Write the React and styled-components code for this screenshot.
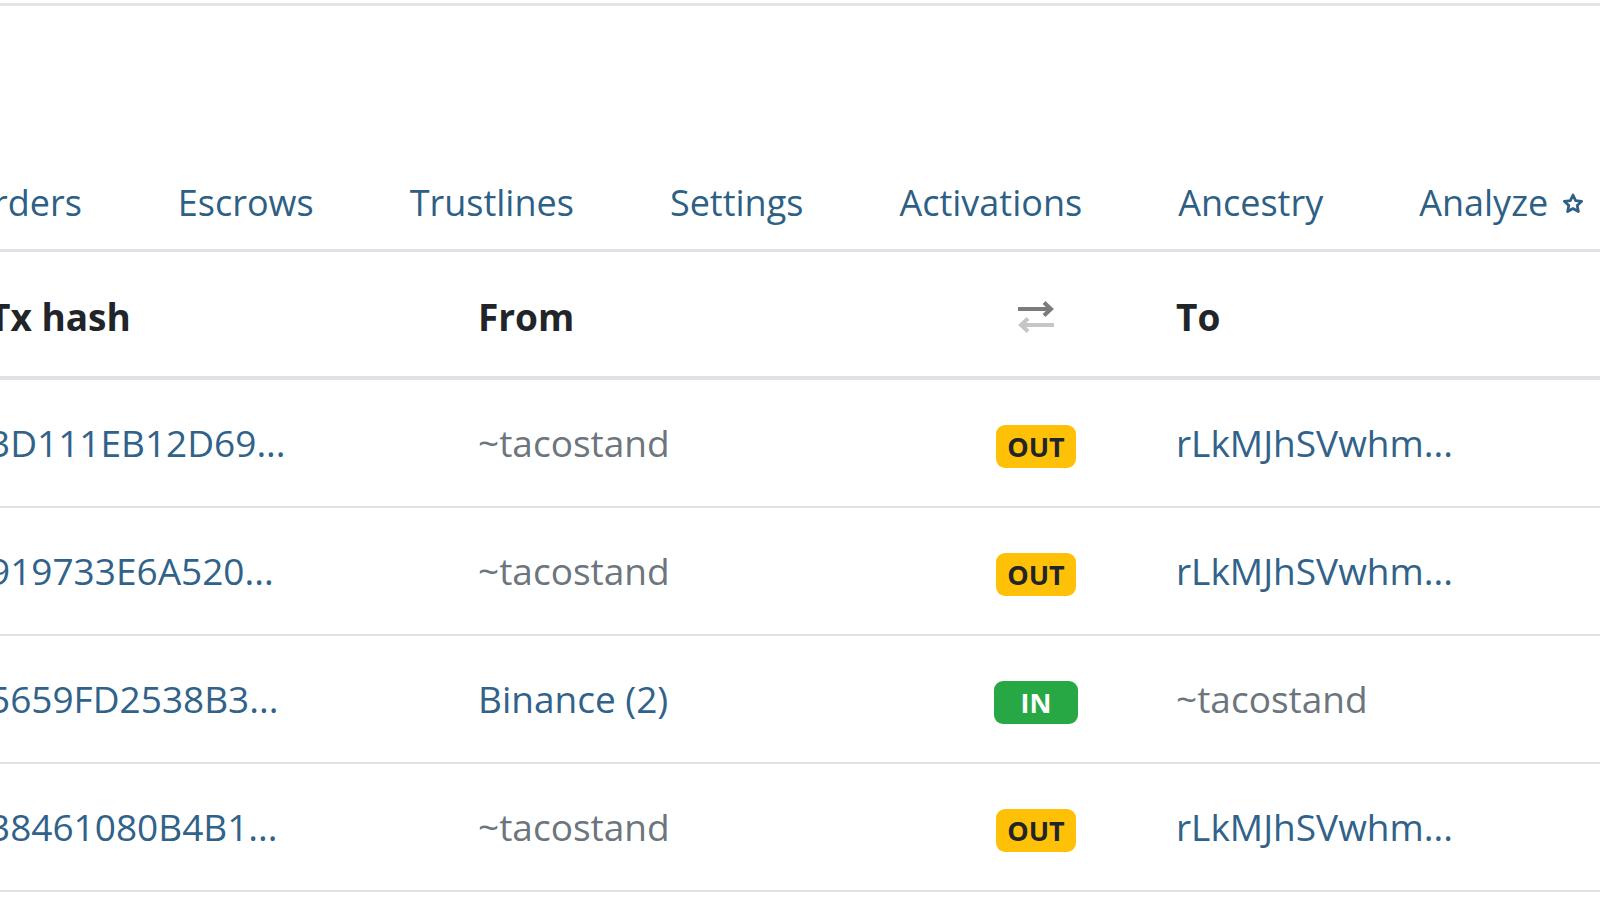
import styled, { createGlobalStyle } from "styled-components";

const GlobalStyle = createGlobalStyle`
  html, body {
    margin: 0;
    padding: 0;
    background: #fff;
  }
  body {
    font-family: "Open Sans", "Noto Sans", sans-serif;
    color: #212529;
    overflow: hidden;
  }
`;

const Page = styled.div`
  width: 1600px;
  height: 900px;
  overflow: hidden;
`;

const TopRule = styled.div`
  margin-top: 3px;
  height: 3px;
  background: #e4e4e4;
`;

const Tabs = styled.nav`
  display: flex;
  gap: 96px;
  margin: 151px 0 0 -35px;
  border-bottom: 3px solid #dee2e6;
  white-space: nowrap;
`;

const Tab = styled.a`
  display: flex;
  align-items: center;
  gap: 14px;
  padding: 21px 0;
  line-height: 50px;
  font-size: 36px;
  color: #2e5f84;
  text-decoration: none;
`;

const Table = styled.div`
  margin-left: -11px;
`;

const Row = styled.div`
  display: grid;
  grid-template-columns: 489px 478px 160px 1fr;
  border-bottom: ${(p) => (p.$head ? "4px" : "2px")} solid #dee2e6;
  padding: ${(p) => (p.$head ? "40px 0 34px" : "38px 0")};
  line-height: 50px;
  font-size: 37px;
  white-space: nowrap;
`;

const HeadCell = styled.div`
  font-weight: 700;
  color: #212529;
  padding-left: ${(p) => (p.$last ? "60px" : "0")};
`;

const IconCell = styled.div`
  display: flex;
  align-items: center;
  justify-content: center;
`;

const Cell = styled.div`
  color: ${(p) => (p.$muted ? "#6c757d" : "#30628a")};
  padding-left: ${(p) => (p.$last ? "60px" : "0")};
  text-align: ${(p) => (p.$center ? "center" : "left")};
`;

const Badge = styled.span`
  display: inline-block;
  padding: ${(p) => (p.$in ? "8px 27px" : "8px 11px")};
  font-size: 27px;
  font-weight: 700;
  line-height: 1;
  border-radius: 9px;
  background: ${(p) => (p.$in ? "#28a745" : "#ffc107")};
  color: ${(p) => (p.$in ? "#fff" : "#212529")};
`;

const Star = () => (
  <svg width="22" height="21" viewBox="0 0 24 23" aria-hidden="true">
    <path
      d="M12 2.2l2.9 6.1 6.6.8-4.9 4.6 1.3 6.6L12 17l-5.9 3.3 1.3-6.6-4.9-4.6 6.6-.8z"
      fill="none"
      stroke="currentColor"
      strokeWidth="3"
      strokeLinejoin="round"
    />
  </svg>
);

const SwapIcon = () => (
  <svg width="38" height="34" viewBox="0 0 38 34" aria-hidden="true">
    <g fill="none" strokeWidth="4" strokeLinecap="butt" strokeLinejoin="miter">
      <path d="M1 9h33M27 2.5l7 6.5-7 6.5" stroke="#7b7b7b" />
      <path d="M37 25H4M11 18.5L4 25l7 6.5" stroke="#c6c6c6" />
    </g>
  </svg>
);

const tabs = ["Orders", "Escrows", "Trustlines", "Settings", "Activations", "Ancestry"];

const rows = [
  { hash: "3D111EB12D69...", from: "~tacostand", fromMuted: true, dir: "OUT", to: "rLkMJhSVwhm...", toMuted: false },
  { hash: "919733E6A520...", from: "~tacostand", fromMuted: true, dir: "OUT", to: "rLkMJhSVwhm...", toMuted: false },
  { hash: "5659FD2538B3...", from: "Binance (2)", fromMuted: false, dir: "IN", to: "~tacostand", toMuted: true },
  { hash: "38461080B4B1...", from: "~tacostand", fromMuted: true, dir: "OUT", to: "rLkMJhSVwhm...", toMuted: false },
];

export default function App() {
  return (
    <Page>
      <GlobalStyle />
      <TopRule />
      <Tabs>
        {tabs.map((t) => (
          <Tab key={t} href="#">
            {t}
          </Tab>
        ))}
        <Tab href="#">
          Analyze
          <Star />
        </Tab>
      </Tabs>
      <Table>
        <Row $head>
          <HeadCell>Tx hash</HeadCell>
          <HeadCell>From</HeadCell>
          <IconCell>
            <SwapIcon />
          </IconCell>
          <HeadCell $last>To</HeadCell>
        </Row>
        {rows.map((r) => (
          <Row key={r.hash}>
            <Cell>{r.hash}</Cell>
            <Cell $muted={r.fromMuted}>{r.from}</Cell>
            <Cell $center>
              <Badge $in={r.dir === "IN"}>{r.dir}</Badge>
            </Cell>
            <Cell $last $muted={r.toMuted}>
              {r.to}
            </Cell>
          </Row>
        ))}
      </Table>
    </Page>
  );
}
